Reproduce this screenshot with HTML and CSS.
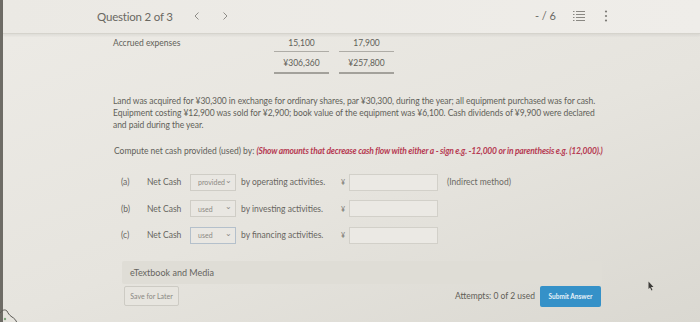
FILE: index.html
```html
<!DOCTYPE html>
<html lang="en">
<head>
    <meta charset="UTF-8">
    <title>Question 2 of 3</title>
    <link rel="stylesheet" href="styles.css">
</head>
<body>
    <div class="frame">
        <div class="topbar">
            <div class="q-nav">
                <span class="q-title">Question 2 of 3</span>
                <svg class="arrow prev" width="5" height="8" viewBox="0 0 5 8"><path d="M4.5 0.5 L1 4 L4.5 7.5" fill="none" stroke="#8e8c87" stroke-width="1"/></svg>
                <svg class="arrow next" width="5" height="8" viewBox="0 0 5 8"><path d="M0.5 0.5 L4 4 L0.5 7.5" fill="none" stroke="#8e8c87" stroke-width="1"/></svg>
            </div>
            <div class="tools">
                <span class="score">- / 6</span>
                <svg class="icon-list" width="12" height="11" viewBox="0 0 12 11">
                    <g stroke="#8a8883" stroke-width="1">
                        <line x1="0" y1="1.5" x2="1.5" y2="1.5"/><line x1="3" y1="1.5" x2="12" y2="1.5"/>
                        <line x1="0" y1="4.5" x2="1.5" y2="4.5"/><line x1="3" y1="4.5" x2="12" y2="4.5"/>
                        <line x1="0" y1="7.5" x2="1.5" y2="7.5"/><line x1="3" y1="7.5" x2="12" y2="7.5"/>
                        <line x1="0" y1="10.5" x2="1.5" y2="10.5"/><line x1="3" y1="10.5" x2="12" y2="10.5"/>
                    </g>
                </svg>
                <svg class="icon-more" width="4" height="12" viewBox="0 0 4 12">
                    <g fill="#7d7b76"><circle cx="2" cy="1.5" r="1.1"/><circle cx="2" cy="6" r="1.1"/><circle cx="2" cy="10.5" r="1.1"/></g>
                </svg>
            </div>
        </div>

        <div class="question">
            <div class="ledger">
                <div class="ledger-row">
                    <span class="ledger-label">Accrued expenses</span>
                    <span class="amt single">15,100</span>
                    <span class="amt single">17,900</span>
                </div>
                <div class="ledger-row">
                    <span class="ledger-label"></span>
                    <span class="amt double">&yen;306,360</span>
                    <span class="amt double">&yen;257,800</span>
                </div>
            </div>

            <p class="text">Land was acquired for &yen;30,300 in exchange for ordinary shares, par &yen;30,300, during the year; all equipment purchased was for cash. Equipment costing &yen;12,900 was sold for &yen;2,900; book value of the equipment was &yen;6,100. Cash dividends of &yen;9,900 were declared and paid during the year.</p>

            <p class="instruct">Compute net cash provided (used) by: <em>(Show amounts that decrease cash flow with either a - sign e.g. -12,000 or in parenthesis e.g. (12,000).)</em></p>

            <div class="answers">
                <div class="answer-row">
                    <span class="tag">(a)</span>
                    <span class="lead">Net Cash</span>
                    <span class="select">provided<span class="caret">&#8964;</span></span>
                    <span class="desc">by operating activities.</span>
                    <span class="yen">&yen;</span>
                    <span class="field"></span>
                    <span class="note">(Indirect method)</span>
                </div>
                <div class="answer-row">
                    <span class="tag">(b)</span>
                    <span class="lead">Net Cash</span>
                    <span class="select">used<span class="caret">&#8964;</span></span>
                    <span class="desc">by investing activities.</span>
                    <span class="yen">&yen;</span>
                    <span class="field"></span>
                </div>
                <div class="answer-row">
                    <span class="tag">(c)</span>
                    <span class="lead">Net Cash</span>
                    <span class="select focus">used<span class="caret">&#8964;</span></span>
                    <span class="desc">by financing activities.</span>
                    <span class="yen">&yen;</span>
                    <span class="field"></span>
                </div>
            </div>

            <div class="etext">eTextbook and Media</div>

            <div class="actions">
                <a class="btn-save">Save for Later</a>
                <div class="submit-box">
                    <span class="attempts">Attempts: 0 of 2 used</span>
                    <a class="btn-submit">Submit Answer</a>
                </div>
            </div>
        </div>

        <svg class="pointer" width="6" height="10" viewBox="0 0 6 10">
            <path d="M0.5 0.5 L0.5 8 L2 6.5 L3.5 9.5 L4.5 9 L3 6 L5.5 6 Z" fill="#3c3b38"/>
        </svg>
        <svg class="corner" width="20" height="16" viewBox="0 0 20 16">
            <path d="M0 6 C2 3 5 2 7 4 C8 6 9 8 12 10 C14 11 16 13 17 16" fill="none" stroke="#5a5853" stroke-width="1"/>
            <circle cx="5" cy="12" r="1.2" fill="#7ea27a"/>
        </svg>
    </div>
</body>
</html>
```

FILE: styles.css
```css
* {
    margin: 0;
    padding: 0;
    box-sizing: border-box;
}

body {
    width: 700px;
    height: 322px;
    overflow: hidden;
    font-family: Lato, "Open Sans", sans-serif;
    color: #615f59;
    background: linear-gradient(160deg, #edebe6 0%, #e6e4de 55%, #dad8d1 100%);
}

.frame {
    position: relative;
    height: 322px;
    border-left: 3px solid #6e6c66;
}

.topbar {
    height: 34px;
    display: flex;
    align-items: center;
    justify-content: space-between;
    padding: 0 92px 0 94px;
    background: linear-gradient(90deg, #ebe9e4, #efede9);
    border-bottom: 1px solid #d5d3cc;
    box-shadow: 0 2px 2px rgba(0, 0, 0, .05);
}

.q-nav {
    display: flex;
    align-items: center;
    margin-top: -1px;
}

.q-title {
    font-size: 11.5px;
    color: #6a6862;
    letter-spacing: -0.2px;
}

.arrow.prev {
    margin-left: 21px;
}

.arrow.next {
    margin-left: 24px;
}

.tools {
    display: flex;
    align-items: center;
    margin-top: -2px;
}

.score {
    font-size: 11px;
    color: #6b6964;
}

.icon-list {
    margin-left: 17px;
}

.icon-more {
    margin-left: 19px;
}

.question {
    padding-left: 107px;
    width: 600px;
    font-size: 8.5px;
}

.ledger {
    padding-top: 3px;
    padding-left: 3px;
}

.ledger-row {
    display: flex;
    height: 20px;
}

.ledger-label {
    width: 161px;
    line-height: 13px;
}

.amt {
    width: 55px;
    margin-right: 10px;
    text-align: center;
    line-height: 13px;
}

.amt.single {
    height: 15px;
    border-bottom: 1px solid #aeaca6;
}

.amt.double {
    height: 17px;
    border-bottom: 2px solid #a3a19b;
}

.text {
    margin-top: 18px;
    margin-left: 3px;
    line-height: 12px;
    letter-spacing: -0.05px;
}

.instruct {
    margin-top: 14px;
    margin-left: 4px;
    line-height: 12px;
    white-space: nowrap;
}

.instruct em {
    font-weight: bold;
    color: #b63a52;
    letter-spacing: -0.2px;
}

.answers {
    margin-top: 12px;
    padding-left: 11px;
}

.answer-row {
    display: flex;
    align-items: center;
    height: 26.5px;
    color: #67655f;
}

.tag {
    width: 26px;
}

.lead {
    width: 43px;
}

.select {
    display: flex;
    align-items: center;
    justify-content: space-between;
    width: 46px;
    height: 17px;
    padding: 0 3px 0 7px;
    border: 1px solid #cfcdc6;
    background: #e9e7e2;
    font-size: 7px;
    color: #8b8983;
}

.select.focus {
    border-color: #b4c0cb;
}

.caret {
    font-size: 8px;
    line-height: 7px;
    margin-top: -4px;
}

.desc {
    width: 105px;
    padding-left: 5px;
}

.yen {
    width: 8px;
    font-size: 7px;
    color: #77756f;
}

.field {
    width: 89px;
    height: 17px;
    border: 1px solid #d2d0c9;
    background: #ebe9e4;
}

.note {
    margin-left: 9px;
    color: #6c6a64;
}

.etext {
    margin-top: 12px;
    margin-left: 12px;
    width: 480px;
    height: 23px;
    line-height: 23px;
    padding-left: 8px;
    font-size: 9px;
    color: #66645e;
    background: #dfddd6;
    border-radius: 2px;
}

.actions {
    display: flex;
    justify-content: space-between;
    align-items: center;
    margin-left: 14px;
    width: 477px;
    margin-top: 2px;
}

.btn-save {
    display: inline-block;
    width: 55px;
    height: 20px;
    line-height: 18px;
    text-align: center;
    font-size: 7px;
    color: #8a8882;
    border: 1px solid #cdcbc4;
    border-radius: 2px;
    background: #e7e5df;
}

.submit-box {
    display: flex;
    align-items: center;
}

.attempts {
    font-size: 8.5px;
    color: #5f5d57;
    margin-right: 5px;
}

.btn-submit {
    display: inline-block;
    width: 61px;
    height: 21px;
    line-height: 21px;
    text-align: center;
    font-size: 6.5px;
    font-weight: bold;
    color: #e8f2f8;
    background: #3591c8;
    border-radius: 2px;
}

.pointer {
    position: absolute;
    left: 645px;
    top: 281px;
}

.corner {
    position: absolute;
    left: -3px;
    top: 307px;
}
```
